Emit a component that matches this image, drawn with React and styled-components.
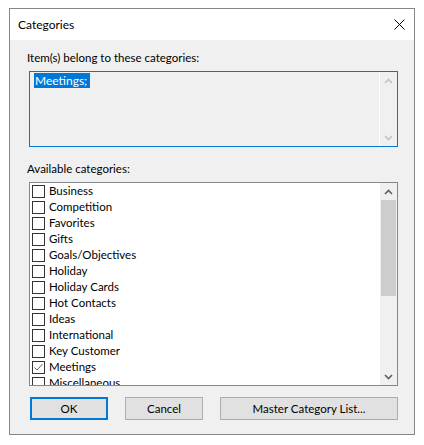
import React from "react";
import styled, { createGlobalStyle } from "styled-components";

const Global = createGlobalStyle`
  html, body { margin: 0; padding: 0; background: #ffffff; }
  body { font-family: "Segoe UI", Lato, "Liberation Sans", sans-serif; font-size: 11.5px; color: #000; }
`;

const Page = styled.div`
  padding: 8px 0 0 9px;
`;

const Dialog = styled.div`
  width: 406px;
  height: 427px;
  box-sizing: border-box;
  border: 1px solid #868686;
  background: #f0f0f0;
  display: flex;
  flex-direction: column;
`;

const TitleBar = styled.div`
  height: 31px;
  background: #ffffff;
  display: flex;
  align-items: center;
  justify-content: space-between;
  padding: 0 9px 0 8px;
  flex: none;
`;

const Title = styled.span`
  font-size: 12px;
  line-height: 16px;
`;

const Body = styled.div`
  flex: 1;
  padding: 10px 16px 0 19px;
  display: flex;
  flex-direction: column;
`;

const Label = styled.div`
  margin-left: -2px;
  line-height: 16px;
  margin-top: ${(p) => p.$top || 0}px;
  margin-bottom: 5px;
`;

const ReadBox = styled.div`
  width: 369px;
  height: 76px;
  box-sizing: border-box;
  border: 1px solid #0078d7;
  background: #f0f0f0;
  display: flex;
`;

const ReadText = styled.div`
  flex: 1;
  padding: 1px 0 0 4px;
  line-height: 15px;
`;

const Selected = styled.span`
  background: #0078d7;
  color: #fff;
  padding: 0 3px 0 1px;
  display: inline-block;
  height: 15px;
  font-size: 12px;
`;

const Scrollbar = styled.div`
  width: 17px;
  flex: none;
  display: flex;
  flex-direction: column;
  background: #f0f0f0;
  border-left: ${(p) => (p.$sep ? "1px solid #ffffff" : "none")};
`;

const ArrowBtn = styled.div`
  height: 17px;
  flex: none;
  display: flex;
  align-items: center;
  justify-content: center;
`;

const Track = styled.div`
  flex: 1;
  display: flex;
  flex-direction: column;
`;

const Thumb = styled.div`
  height: 96px;
  background: #cdcdcd;
  margin: 0 1px;
`;

const ListBox = styled.div`
  width: 369px;
  height: 204px;
  box-sizing: border-box;
  border: 1px solid #828790;
  background: #ffffff;
  display: flex;
`;

const Items = styled.div`
  flex: 1;
  overflow: hidden;
  display: flex;
  flex-direction: column;
`;

const Row = styled.div`
  height: 16px;
  flex: none;
  display: flex;
  align-items: center;
  padding-left: 2px;
  line-height: 16px;
`;

const Box = styled.span`
  width: 13px;
  height: 13px;
  box-sizing: border-box;
  border: 1px solid #333333;
  background: #fff;
  flex: none;
  margin-right: 4px;
  display: flex;
  align-items: center;
  justify-content: center;
`;

const Buttons = styled.div`
  margin-top: 11px;
  margin-left: 1px;
  display: flex;
  gap: 17px;
`;

const Button = styled.div`
  width: ${(p) => p.$w}px;
  height: 23px;
  box-sizing: border-box;
  background: #e1e1e1;
  border: ${(p) => (p.$default ? "2px solid #0078d7" : "1px solid #adadad")};
  display: flex;
  align-items: center;
  justify-content: center;
  line-height: 16px;
`;

const Chevron = ({ up, color }) => (
  <svg width="9" height="6" viewBox="0 0 9 6">
    <polyline
      points={up ? "1,5 4.5,1.5 8,5" : "1,1 4.5,4.5 8,1"}
      fill="none"
      stroke={color}
      strokeWidth="1.6"
    />
  </svg>
);

const items = [
  "Business",
  "Competition",
  "Favorites",
  "Gifts",
  "Goals/Objectives",
  "Holiday",
  "Holiday Cards",
  "Hot Contacts",
  "Ideas",
  "International",
  "Key Customer",
  "Meetings",
  "Miscellaneous",
];

export default function App() {
  return (
    <Page>
      <Global />
      <Dialog>
        <TitleBar>
          <Title>Categories</Title>
          <svg width="11" height="11" viewBox="0 0 11 11">
            <path d="M0.5 0.5 L10.5 10.5 M10.5 0.5 L0.5 10.5" stroke="#000" strokeWidth="1" />
          </svg>
        </TitleBar>
        <Body>
          <Label>Item(s) belong to these categories:</Label>
          <ReadBox>
            <ReadText>
              <Selected>Meetings;</Selected>
            </ReadText>
            <Scrollbar $sep>
              <ArrowBtn>
                <Chevron up color="#c2c2c2" />
              </ArrowBtn>
              <Track />
              <ArrowBtn>
                <Chevron color="#c2c2c2" />
              </ArrowBtn>
            </Scrollbar>
          </ReadBox>
          <Label $top={14}>Available categories:</Label>
          <ListBox>
            <Items>
              {items.map((it) => (
                <Row key={it}>
                  <Box>
                    {it === "Meetings" && (
                      <svg width="11" height="11" viewBox="0 0 11 11">
                        <polyline points="1.5,5.5 4,8 9.5,2" fill="none" stroke="#606060" strokeWidth="1" />
                      </svg>
                    )}
                  </Box>
                  {it}
                </Row>
              ))}
            </Items>
            <Scrollbar>
              <ArrowBtn>
                <Chevron up color="#606060" />
              </ArrowBtn>
              <Track>
                <Thumb />
              </Track>
              <ArrowBtn>
                <Chevron color="#606060" />
              </ArrowBtn>
            </Scrollbar>
          </ListBox>
          <Buttons>
            <Button $w={78} $default>OK</Button>
            <Button $w={78}>Cancel</Button>
            <Button $w={178}>Master Category List...</Button>
          </Buttons>
        </Body>
      </Dialog>
    </Page>
  );
}
